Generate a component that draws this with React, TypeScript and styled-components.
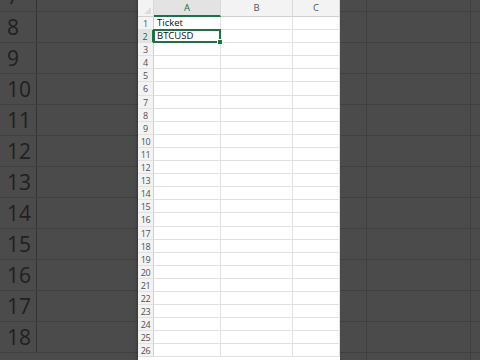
import React from 'react'
import styled, { createGlobalStyle, css } from 'styled-components'

const GlobalStyle = createGlobalStyle`
  html, body {
    margin: 0;
    padding: 0;
    background: #4a4a4a;
    overflow: hidden;
  }
`

const green = '#1f7145'

const Stage = styled.div`
  display: flex;
  width: 480px;
  height: 360px;
  overflow: hidden;
  background: #4a4a4a;
`

// blurred, zoomed-in sheet on both sides
const Backdrop = styled.div<{ width: number }>`
  width: ${props => props.width}px;
  flex: none;
  height: 360px;
  overflow: hidden;
  background: #4b4b4b;
`

const BackdropRows = styled.div`
  margin-top: -19.5px;
  display: flex;
  flex-direction: column;
`

const BigRow = styled.div<{ cols: string }>`
  display: grid;
  grid-template-columns: ${props => props.cols};
  height: 31px;
  box-sizing: border-box;
  border-bottom: 1px solid #404040;
`

const BigLabel = styled.div`
  font-family: 'Open Sans', 'Noto Sans', sans-serif;
  font-size: 21px;
  color: #202020;
  line-height: 30px;
  padding-left: 7px;
  border-right: 1px solid #333333;
`

const BigCell = styled.div<{ edge?: boolean }>`
  border-right: 1px solid #3f3f3f;
  ${props =>
    props.edge &&
    css`
      border-right: none;
    `}
`

const Sheet = styled.div`
  width: 202px;
  flex: none;
  height: 360px;
  overflow: hidden;
  background: #ffffff;
  font-family: 'Open Sans', 'Noto Sans', sans-serif;
  box-shadow: 0 0 3px rgba(0, 0, 0, 0.5);
`

const Grid = styled.div`
  display: grid;
  grid-template-columns: 16px 67px 72px 47px;
  grid-template-rows: 17px;
  grid-auto-rows: 13.1px;
`

const Corner = styled.div`
  background: #f3f3f3;
  border-right: 1px solid #d8d8d8;
  border-bottom: 1px solid #d0d0d0;
  box-sizing: border-box;
  position: relative;
  &::after {
    content: '';
    position: absolute;
    right: 2px;
    bottom: 2px;
    border-style: solid;
    border-width: 0 0 7px 7px;
    border-color: transparent transparent #dcdcdc transparent;
  }
`

const ColHead = styled.div<{ active?: boolean }>`
  background: ${props => (props.active ? '#e3e3e3' : '#f3f3f3')};
  color: ${props => (props.active ? '#1c6b40' : '#555555')};
  font-size: 9.5px;
  text-align: center;
  line-height: 16px;
  box-sizing: border-box;
  border-right: 1px solid #dadada;
  border-bottom: ${props => (props.active ? `2px solid ${green}` : '1px solid #d0d0d0')};
`

const RowHead = styled.div<{ active?: boolean }>`
  background: ${props => (props.active ? '#e3e3e3' : '#f3f3f3')};
  color: ${props => (props.active ? '#1c6b40' : '#505050')};
  font-size: 9px;
  text-align: center;
  line-height: 13px;
  box-sizing: border-box;
  border-right: ${props => (props.active ? `2px solid ${green}` : '1px solid #cfcfcf')};
  border-bottom: 1px solid #e2e2e2;
  letter-spacing: -0.3px;
`

const Cell = styled.div<{ selected?: boolean }>`
  font-size: 9.5px;
  color: #111111;
  line-height: 12px;
  padding-left: 3px;
  box-sizing: border-box;
  border-right: 1px solid #e1e1e1;
  border-bottom: 1px solid #e1e1e1;
  white-space: nowrap;
  position: relative;
  ${props =>
    props.selected &&
    css`
      &::after {
        content: '';
        position: absolute;
        left: -1px;
        top: -1.5px;
        right: -1px;
        bottom: -1px;
        border: 2px solid ${green};
      }
      &::before {
        content: '';
        position: absolute;
        right: -3px;
        bottom: -3px;
        width: 4px;
        height: 4px;
        background: ${green};
        border: 1px solid #ffffff;
        z-index: 2;
      }
    `}
`

const leftRows = [7, 8, 9, 10, 11, 12, 13, 14, 15, 16, 17, 18]
const rightRows = Array.from({ length: 13 })
const rows = Array.from({ length: 26 }, (_, i) => i + 1)
const values: Record<number, string> = { 1: 'Ticket', 2: 'BTCUSD' }

const App: React.FC = () => {
  return (
    <>
      <GlobalStyle />
      <Stage>
        <Backdrop width={138}>
          <BackdropRows>
            {leftRows.map(n => (
              <BigRow cols="37px 1fr" key={n}>
                <BigLabel>{n}</BigLabel>
                <BigCell edge />
              </BigRow>
            ))}
          </BackdropRows>
        </Backdrop>

        <Sheet>
          <Grid>
            <Corner />
            <ColHead active>A</ColHead>
            <ColHead>B</ColHead>
            <ColHead>C</ColHead>
            {rows.map(r => (
              <React.Fragment key={r}>
                <RowHead active={r === 2}>{r}</RowHead>
                <Cell selected={r === 2}>{values[r]}</Cell>
                <Cell />
                <Cell />
              </React.Fragment>
            ))}
          </Grid>
        </Sheet>

        <Backdrop width={140}>
          <BackdropRows>
            {rightRows.map((_, i) => (
              <BigRow cols="27px 104px 1fr" key={i}>
                <BigCell />
                <BigCell />
                <BigCell edge />
              </BigRow>
            ))}
          </BackdropRows>
        </Backdrop>
      </Stage>
    </>
  )
}

export default App
